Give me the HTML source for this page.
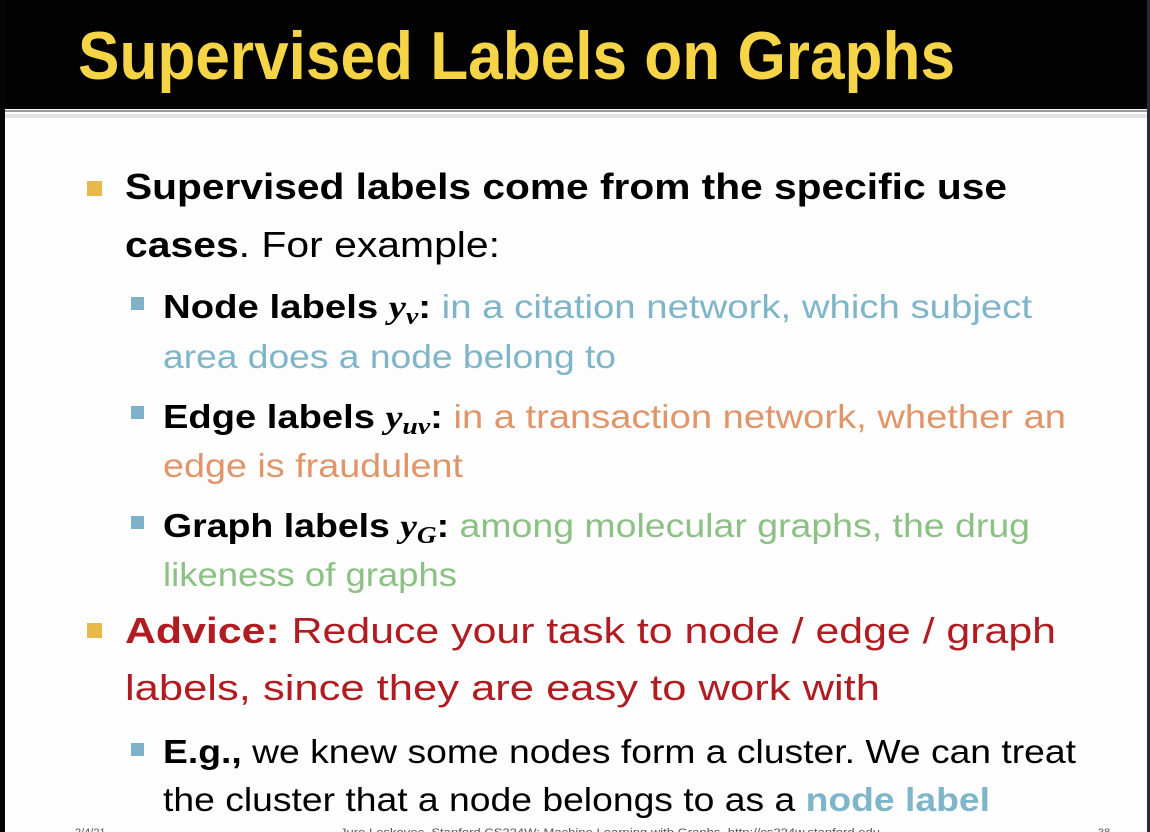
<!DOCTYPE html>
<html><head><meta charset="utf-8"><style>
html,body{margin:0;padding:0;width:1150px;height:832px;overflow:hidden;background:#fff}
svg{display:block}
text{font-family:"Liberation Sans",sans-serif}
.b{font-weight:bold}
.m{font-family:"Liberation Serif",serif;font-style:italic;font-weight:bold}
</style></head><body>
<svg width="1150" height="832" viewBox="0 0 1150 832" xmlns="http://www.w3.org/2000/svg">
<rect x="0" y="0" width="1150" height="832" fill="#fdfdfd"/>
<rect x="0" y="0" width="1150" height="109" fill="#020202"/>
<rect x="0" y="110" width="1150" height="2" fill="#9a9a9a"/>
<rect x="0" y="114" width="1150" height="4" fill="#e2e2e2"/>
<rect x="0" y="0" width="5" height="832" fill="#050505"/>
<rect x="1147" y="0" width="3" height="832" fill="#2a2a35"/>
<text x="78" y="79" font-size="68" class="b" fill="#f6d448" textLength="877" lengthAdjust="spacingAndGlyphs">Supervised Labels on Graphs</text>

<rect x="87" y="181" width="15" height="15" fill="#e8b84a"/>
<text x="125" y="199" font-size="36" class="b" fill="#000" textLength="882" lengthAdjust="spacingAndGlyphs">Supervised labels come from the specific use</text>
<text x="125" y="257" font-size="36" fill="#000" textLength="375" lengthAdjust="spacingAndGlyphs"><tspan class="b">cases</tspan>. For example:</text>

<rect x="131" y="297" width="13" height="13" fill="#7fb2c9"/>
<text x="163" y="318" font-size="33" fill="#7fb5c8" textLength="869" lengthAdjust="spacingAndGlyphs"><tspan class="b" fill="#000">Node labels </tspan><tspan class="m" fill="#000">y</tspan><tspan class="m" fill="#000" font-size="24" dy="6">v</tspan><tspan class="b" fill="#000" dy="-6">:</tspan> in a citation network, which subject</text>
<text x="163" y="368" font-size="33" fill="#7fb5c8" textLength="453" lengthAdjust="spacingAndGlyphs">area does a node belong to</text>

<rect x="131" y="406" width="13" height="13" fill="#7fb2c9"/>
<text x="163" y="428" font-size="33" fill="#e0956a" textLength="903" lengthAdjust="spacingAndGlyphs"><tspan class="b" fill="#000">Edge labels </tspan><tspan class="m" fill="#000">y</tspan><tspan class="m" fill="#000" font-size="24" dy="6">uv</tspan><tspan class="b" fill="#000" dy="-6">:</tspan> in a transaction network, whether an</text>
<text x="163" y="477" font-size="33" fill="#e0956a" textLength="300" lengthAdjust="spacingAndGlyphs">edge is fraudulent</text>

<rect x="131" y="516" width="13" height="13" fill="#7fb2c9"/>
<text x="163" y="537" font-size="33" fill="#8cc084" textLength="867" lengthAdjust="spacingAndGlyphs"><tspan class="b" fill="#000">Graph labels </tspan><tspan class="m" fill="#000">y</tspan><tspan class="m" fill="#000" font-size="24" dy="6">G</tspan><tspan class="b" fill="#000" dy="-6">:</tspan> among molecular graphs, the drug</text>
<text x="163" y="586" font-size="33" fill="#8cc084" textLength="294" lengthAdjust="spacingAndGlyphs">likeness of graphs</text>

<rect x="87" y="623" width="15" height="15" fill="#e8b84a"/>
<text x="125" y="643" font-size="36" fill="#b01c22" textLength="931" lengthAdjust="spacingAndGlyphs"><tspan class="b">Advice:</tspan> Reduce your task to node / edge / graph</text>
<text x="125" y="700" font-size="36" fill="#b01c22" textLength="755" lengthAdjust="spacingAndGlyphs">labels, since they are easy to work with</text>

<rect x="131" y="743" width="13" height="13" fill="#7fb2c9"/>
<text x="163" y="763" font-size="33" fill="#000" textLength="913" lengthAdjust="spacingAndGlyphs"><tspan class="b">E.g.,</tspan> we knew some nodes form a cluster. We can treat</text>
<text x="163" y="811" font-size="33" fill="#000" textLength="827" lengthAdjust="spacingAndGlyphs">the cluster that a node belongs to as a <tspan class="b" fill="#7fb5c8">node label</tspan></text>

<text x="75" y="836" font-size="11" fill="#555">2/4/21</text>
<text x="340" y="836" font-size="11" fill="#555" textLength="540" lengthAdjust="spacingAndGlyphs">Jure Leskovec, Stanford CS224W: Machine Learning with Graphs, http://cs224w.stanford.edu</text>
<text x="1098" y="836" font-size="11" fill="#555">38</text>
</svg>
</body></html>
